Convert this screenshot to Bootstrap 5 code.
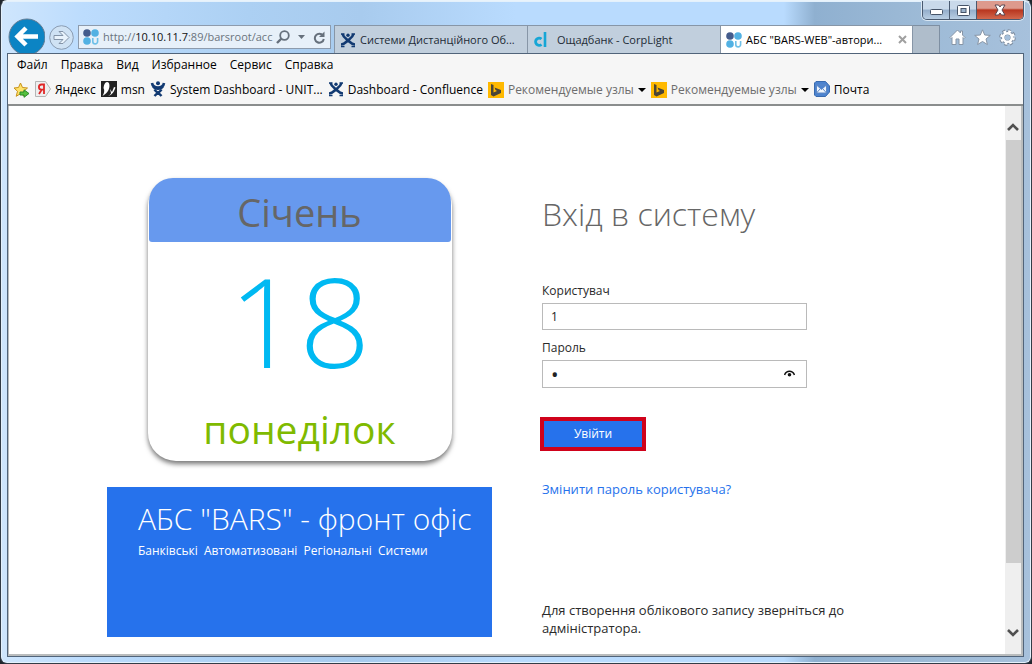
<!DOCTYPE html>
<html lang="uk">
<head>
<meta charset="utf-8">
<meta name="viewport" content="width=device-width, initial-scale=1">
<title>АБС "BARS-WEB" - авторизація</title>
<link href="https://cdn.jsdelivr.net/npm/bootstrap@5.3.0/dist/css/bootstrap.min.css" rel="stylesheet">
<style>
  body { font-family: "Open Sans", "Noto Sans", sans-serif; font-size: 12px; line-height: 18px; color: #000; background: #20262d; }
  svg { display: block; flex: none; }
  button { font: inherit; }
  .plain { border: 0; background: none; padding: 0; color: inherit; }

  .window-frame {
    border: 1px solid #333c47; border-top-color: #e9f3fb; border-radius: 7px;
    padding: 0 7px 6px 6px;
    background: linear-gradient(90deg, #cfe6fd 0%, #bcdcfd 8%, #acd0f3 24%, #a8cbee 35%, #b9dbfe 50%, #b9dbfe 76%, #8fb0d0 79%, #9ebbd7 90%, #a7c1dc 100%);
    box-shadow: inset 0 0 0 1px #e4f1fc;
  }
  .caption-row { height: 24px; }
  .caption-group { height: 19px; border: 1px solid #4a5a70; border-top: 0; border-radius: 0 0 5px 5px; box-shadow: 0 0 0 1px #dbe8f4; overflow: hidden; }
  .caption-group button { width: 27px; background: linear-gradient(#c9d9ea 0 45%, #94aecb 50%, #b9cee3); border-right: 1px solid #4a5a70; display: flex; align-items: center; justify-content: center; }
  .caption-group .close-window { width: 46px; border-right: 0; background: linear-gradient(#dd9a8d 0 40%, #b8361f 50%, #d2674c); }

  .tool-row { height: 28px; gap: 3px; font-size: 11px; }
  .back-btn { width: 38px; height: 38px; margin-top: -7px; }
  .forward-btn { width: 27px; height: 27px; }
  .address { width: 253px; height: 24px; border: 1px solid #8d9bad; background: #e7f0f9; }
  .addr-text { color: #6b747d; white-space: nowrap; }
  .addr-text b { font-weight: 500; color: #111; }
  .tabs-strip { height: 28px; }
  .page-tab { width: 193px; height: 28px; border: 1px solid #8796a7; border-bottom: 0; border-right: 0; background: #c1cfdd; color: #222b35; white-space: nowrap; padding: 0 5px 0 5px; }
  .page-tab.current { background: #fff; color: #000; border-right: 1px solid #8796a7; padding-right: 4px; }
  .new-tab { width: 27px; height: 28px; border: 1px solid #7e8fa2; border-bottom: 0; border-left: 0; background: #afbdcb; }

  .client { position: relative; z-index: 1; border: 1px solid #51647a; background: #fff; }
  .menu-row, .fav-row { background: #f6f6f6; }
  .menu-row { height: 22px; padding-left: 9px; gap: 13px; }
  .fav-row { height: 30px; padding-left: 5px; gap: 5px; border-bottom: 2px solid #8a8d8d; white-space: nowrap; }
  .client a.bar-link { color: #000; text-decoration: none; }
  .client a.muted-link { color: #6d6d6d; }
  .page-wrap { border: solid #b9bcbd; border-width: 0 2px 2px 1px; min-height: 0; }
  .page-body { min-height: 0; overflow: hidden; }
  .login-grid { display: grid; grid-template-columns: 385fr 365fr; column-gap: 50px; max-width: 800px; padding-top: 72px; }
  .scroll-track { width: 16px; background: #efefef; }
  .scroll-track button { height: 34px; display: flex; align-items: center; justify-content: center; }
  .scroll-thumb { flex: 423 1 0; background: #cdcdcd; margin-left: 1px; }
  .scroll-gap { flex: 57 1 0; }

  .calendar { width: 304px; height: 283px; text-align: center; border-radius: 28px; background: #fff; box-shadow: 0 3px 5px #777; color: #666; }
  .calendar .month { height: 64px; margin: 0 1px; font-size: 38px; line-height: 68px; background: #6799ee; border-radius: 24px 24px 3px 3px; }
  .calendar .day { font-size: 124px; line-height: 156px; color: #00b9f2; font-weight: 300; }
  .calendar .weekday { font-size: 39px; line-height: 62px; color: #7fba00; }
  .brand-box { margin-top: 26px; height: 150px; padding: 12px 20px 0 31px; background: #2672ec; color: #fff; white-space: nowrap; }
  .brand-box h2 { font-size: 30px; line-height: 40px; font-weight: 300; margin: 0; }
  .brand-box p { font-size: 12px; line-height: 24px; white-space: pre; margin: 0; }

  .login-col { color: #2a2a2a; }
  .login-col h1 { font-size: 32px; line-height: 48px; font-weight: 300; color: #666; margin: 12px 0 43px; }
  .login-col label { line-height: 20px; margin-bottom: 2px; }
  .login-col .form-control { width: 265px; height: 27px; font-size: 12px; border: 1px solid #bababa; border-radius: 0; padding: 2px 8px; color: #222; margin-bottom: 8px; }
  .login-col #pass { height: 28px; font-size: 20px; line-height: 20px; }
  .pass-box { width: 265px; }
  .pass-box button { position: absolute; right: 12px; top: 10px; }
  .login-btn { width: 106px; height: 34px; border: 4px solid #d0021b; border-radius: 0; background: #2672ec; color: #fff; font-size: 12px; padding: 0; margin: 29px 0 29px -2px; }
  .login-col a { font-size: 13px; color: #2672ec; text-decoration: none; }
  .login-col .note { font-size: 13px; margin-top: 102px; }
</style>
</head>
<body>
<svg width="0" height="0" class="position-absolute">
  <defs>
    <symbol id="i-app" viewBox="0 0 16 16"><circle cx="4" cy="4" r="3.800" fill="#445c8c"/><circle cx="12" cy="4" r="3.800" fill="#52b1e3"/><circle cx="4" cy="12" r="3.800" fill="#52b1e3"/><path d="M9.800 9v3.500a2.400 2.400 0 0 0 4.800 0V9" fill="none" stroke="#6fc0e8" stroke-width="1.600"/></symbol>
    <symbol id="i-conf" viewBox="0 0 16 16"><g fill="none" stroke="#123a72" stroke-width="2.600"><path d="M2.500 2c.8 3 2.500 4 5 6s4 4.500 7.500 4.500M13.500 2c-.8 3-2.500 4-5 6s-4 4.500-7.500 4.500"/></g><circle cx="8" cy="3.300" r="1.700" fill="#123a72"/><path d="M1 2h3.500M11.500 2H15M1 14.500h3.500M11.500 14.500H15" stroke="#123a72" stroke-width="1.500"/></symbol>
    <symbol id="i-jira" viewBox="0 0 16 16"><circle cx="8" cy="2.200" r="2" fill="#123a72"/><g fill="none" stroke="#123a72"><path d="M2 2c.5 3.500 3 4.500 6 4.500S13.500 5.500 14 2" stroke-width="2.600"/><path d="M3 5.500c1 2 3 2.500 5 2.500s4-.5 5-2.500" stroke-width="2"/><path d="M4.500 8.500c1.500 3 4 3 7 6.500M11.500 8.500c-1.500 3-4 3-7 6.500" stroke-width="2.400"/></g></symbol>
    <symbol id="i-bing" viewBox="0 0 16 16"><path fill="#ffb900" d="M0 0h16v16H0z"/><path fill="#4b4537" d="M3 2l2.500 1v7.500L9 9 7.500 8 6.500 5.500 13 8v3l-7.500 3.500L3 13z"/></symbol>
  </defs>
</svg>

<div class="window-frame d-flex flex-column vh-100">
  <div class="caption-row d-flex justify-content-end align-items-start">
    <div class="caption-group d-flex align-items-stretch">
      <button class="plain" aria-label="Згорнути"><svg width="13" height="6" class="mt-1"><rect x=".5" y=".5" width="12" height="5" rx="1" fill="#fff" stroke="#465468"/></svg></button>
      <button class="plain" aria-label="Розгорнути"><svg width="13" height="11"><rect x=".5" y=".5" width="12" height="10" rx="1" fill="#fff" stroke="#465468"/><rect x="4" y="3.500" width="5" height="4" fill="#9bb3cc" stroke="#465468"/></svg></button>
      <button class="plain close-window" aria-label="Закрити"><svg width="14" height="12" viewBox="0 0 14 12"><path d="M2 1h3.500L7 3l1.500-2H12L9 6l3 5H8.500L7 9l-1.500 2H2l3-5z" fill="#fff" stroke="#5a4650"/></svg></button>
    </div>
  </div>

  <div class="tool-row d-flex">
    <button class="plain back-btn flex-shrink-0" aria-label="Назад"><svg width="38" height="38"><circle cx="20" cy="19" r="18" fill="#0c84c4" stroke="#657c93"/><path d="M19 10L10.500 18.500 19 27M11 18.500H31" fill="none" stroke="#fff" stroke-width="4.500"/></svg></button>
    <button class="plain forward-btn flex-shrink-0" aria-label="Вперед"><svg width="27" height="27"><circle cx="13.500" cy="12.500" r="11.800" fill="#cfe2f4" stroke="#8a9cb2"/><path d="M6 10.500h9l-4-4h4l6 6-6 6h-4l4-4H6z" fill="#e9f3fc" stroke="#8494a8"/></svg></button>
    <div class="address d-flex align-items-center ps-1 pe-1 flex-shrink-0">
      <svg width="16" height="16"><use href="#i-app"/></svg>
      <span class="addr-text flex-grow-1 ms-1" role="textbox" aria-label="Адреса">http://<b>10.10.11.7</b>:89/barsroot/acc</span>
      <button class="plain" aria-label="Пошук"><svg width="14" height="14"><circle cx="8.500" cy="5.500" r="4.300" fill="none" stroke="#66707c" stroke-width="1.800"/><path d="M5.500 8.500L1 13" stroke="#66707c" stroke-width="2.400"/></svg></button>
      <button class="plain mx-1 px-1" aria-label="Список"><svg width="7" height="4"><path d="M0 0h7L3.500 4z" fill="#66707c"/></svg></button>
      <button class="plain" aria-label="Оновити"><svg width="13" height="13"><path d="M10 4.500A4.500 4.500 0 1 0 10.800 8" fill="none" stroke="#66707c" stroke-width="2"/><path d="M11.500.5v5.500H6z" fill="#66707c"/></svg></button>
    </div>
    <div class="tabs-strip d-flex flex-grow-1">
      <button class="plain page-tab d-flex align-items-center"><svg width="16" height="16"><use href="#i-conf"/></svg><span class="ms-1">Системи Дистанційного Об...</span></button>
      <button class="plain page-tab d-flex align-items-center"><svg width="16" height="16"><path d="M8.500 7A3.600 3.600 0 1 0 8.500 12.500" fill="none" stroke="#16a6d6" stroke-width="2.800"/><path d="M12 0v15" stroke="#16a6d6" stroke-width="2.600"/></svg><span class="ms-2">Ощадбанк - CorpLight</span></button>
      <div class="page-tab current d-flex align-items-center"><svg width="16" height="16"><use href="#i-app"/></svg><span class="ms-1 flex-grow-1">АБС "BARS-WEB"-автори...</span><button class="plain" aria-label="Закрити вкладку"><svg width="10" height="10"><path d="M1 1l7 7M8 1L1 8" stroke="#a0a0a0" stroke-width="2"/></svg></button></div>
      <button class="plain new-tab" aria-label="Нова вкладка"></button>
    </div>
    <div class="d-flex align-items-center gap-2 pe-1 me-1 pb-1">
      <button class="plain" aria-label="Додому"><svg width="17" height="17"><path d="M8.500 1L1 8.500l1 1 1-1V15.500h4V10h3v5.500h4V8.500l1 1 1-1-2.500-2.500V2h-2v2z" fill="#fff" stroke="#8795a6"/></svg></button>
      <button class="plain" aria-label="Обране"><svg width="17" height="17"><path d="M8.500.8l2.200 5.200 5.600.4-4.300 3.600 1.400 5.500-4.900-3-4.900 3L5 10 .7 6.400l5.600-.4z" fill="#fff" stroke="#8795a6"/></svg></button>
      <button class="plain" aria-label="Параметри"><svg width="17" height="17"><circle cx="8.500" cy="8.500" r="6.600" fill="none" stroke="#7f8ea1" stroke-width="3.400" stroke-dasharray="3 2.180"/><circle cx="8.500" cy="8.500" r="4.600" fill="none" stroke="#7f8ea1" stroke-width="4"/><circle cx="8.500" cy="8.500" r="6" fill="none" stroke="#fff" stroke-width="2.600" stroke-dasharray="2.600 2.112"/><circle cx="8.500" cy="8.500" r="4.300" fill="none" stroke="#fff" stroke-width="2.400"/></svg></button>
    </div>
  </div>

  <div class="client flex-grow-1 d-flex flex-column">
    <nav class="menu-row d-flex align-items-center" aria-label="Меню">
      <a class="bar-link" href="#">Файл</a><a class="bar-link" href="#">Правка</a><a class="bar-link" href="#">Вид</a><a class="bar-link" href="#">Избранное</a><a class="bar-link" href="#">Сервис</a><a class="bar-link" href="#">Справка</a>
    </nav>
    <nav class="fav-row d-flex align-items-center" aria-label="Обране">
      <a class="bar-link" href="#" aria-label="Додати"><svg width="17" height="17"><path d="M7.500 1l2 4.500 5 .5-4 3.300 1.300 5-4.300-2.600-4.300 2.600 1.300-5L1 6l4.500-.5z" fill="#ffe26a" stroke="#c8921a"/><path d="M7 10h4V7.800l5 3.700-5 3.800V13H7z" fill="#55c13e" stroke="#2b8a2b"/></svg></a>
      <a class="bar-link d-flex gap-1" href="#"><svg width="16" height="16"><path d="M.5.500h10l5 7.500-5 7.500H.5z" fill="#eee" stroke="#b5b5b5"/><path d="M9 13V3.500H6.500a2.400 2.400 0 0 0 0 5.200H9M6.500 9L4 13" fill="none" stroke="#e02626" stroke-width="1.800"/></svg>Яндекс</a>
      <a class="bar-link d-flex gap-1" href="#"><svg width="16" height="16"><path d="M0 0h16v16H0z" fill="#222"/><path d="M6 1c3 0 3 5 1.500 8C6 12 4 13 1.500 15 3 12 4 10 2.500 7 3 3 4 1.500 6 1zM9 8l2 3 2-5 1.500.5C13 11 11 14 7 15c2-1 3-2 3-3z" fill="#fff"/></svg>msn</a>
      <a class="bar-link d-flex gap-1" href="#"><svg width="16" height="16"><use href="#i-jira"/></svg>System Dashboard - UNIT...</a>
      <a class="bar-link d-flex gap-1" href="#"><svg width="16" height="16"><use href="#i-conf"/></svg>Dashboard - Confluence</a>
      <a class="bar-link muted-link d-flex gap-1 align-items-center" href="#"><svg width="16" height="16"><use href="#i-bing"/></svg>Рекомендуемые узлы<svg width="8" height="4"><path d="M0 0h8L4 4z"/></svg></a>
      <a class="bar-link muted-link d-flex gap-1 align-items-center" href="#"><svg width="16" height="16"><use href="#i-bing"/></svg>Рекомендуемые узлы<svg width="8" height="4"><path d="M0 0h8L4 4z"/></svg></a>
      <a class="bar-link d-flex gap-1" href="#"><svg width="16" height="16"><path d="M2 .5h9.500l4 4.500v6l-4 4.500H2L.5 14V2z" fill="#4c83cf" stroke="#396baf"/><path d="M2.500 4h10v8h-10zM2.500 4l5 4.500 5-4.500M2.500 12l3.500-4M12.500 12L9 8" fill="#f0f6fd" stroke="#5c88c6"/></svg>Почта</a>
    </nav>

    <div class="page-wrap d-flex flex-grow-1">
      <main class="page-body flex-grow-1">
        <div class="login-grid mx-auto">
          <section>
            <div class="calendar mx-auto">
              <div class="month">Січень</div>
              <div class="day">18</div>
              <div class="weekday">понеділок</div>
            </div>
            <div class="brand-box">
              <h2>АБС "BARS" - фронт офіс</h2>
              <p>Банківські  Автоматизовані  Регіональні  Системи</p>
            </div>
          </section>
          <section class="login-col">
            <h1>Вхід в систему</h1>
            <form onsubmit="return false">
              <label class="d-block" for="user">Користувач</label>
              <input class="form-control" id="user" type="text" value="1">
              <label class="d-block" for="pass">Пароль</label>
              <div class="pass-box position-relative">
                <input class="form-control" id="pass" type="password" value="1">
                <button type="button" class="plain" aria-label="Показати пароль"><svg width="11" height="8"><path d="M.5 5C2.500 0 8.500 0 10.500 5" fill="none" stroke="#111" stroke-width="1.600"/><circle cx="5.500" cy="4.800" r="1.800" fill="#111"/></svg></button>
              </div>
              <button class="btn login-btn d-block" type="submit">Увійти</button>
              <a href="#">Змінити пароль користувача?</a>
            </form>
            <p class="note mb-0">Для створення облікового запису зверніться до адміністратора.</p>
          </section>
        </div>
      </main>
      <div class="scroll-track d-flex flex-column">
        <button class="plain" aria-label="Вгору"><svg width="12" height="10" class="mt-2"><path d="M1 8l5-5 5 5" fill="none" stroke="#505050" stroke-width="2.600"/></svg></button>
        <div class="scroll-thumb"></div>
        <div class="scroll-gap"></div>
        <button class="plain" aria-label="Вниз"><svg width="12" height="10" class="mb-2"><path d="M1 2l5 5 5-5" fill="none" stroke="#505050" stroke-width="2.600"/></svg></button>
      </div>
    </div>
  </div>
</div>
<script src="https://cdn.jsdelivr.net/npm/bootstrap@5.3.0/dist/js/bootstrap.bundle.min.js"></script>
</body>
</html>
